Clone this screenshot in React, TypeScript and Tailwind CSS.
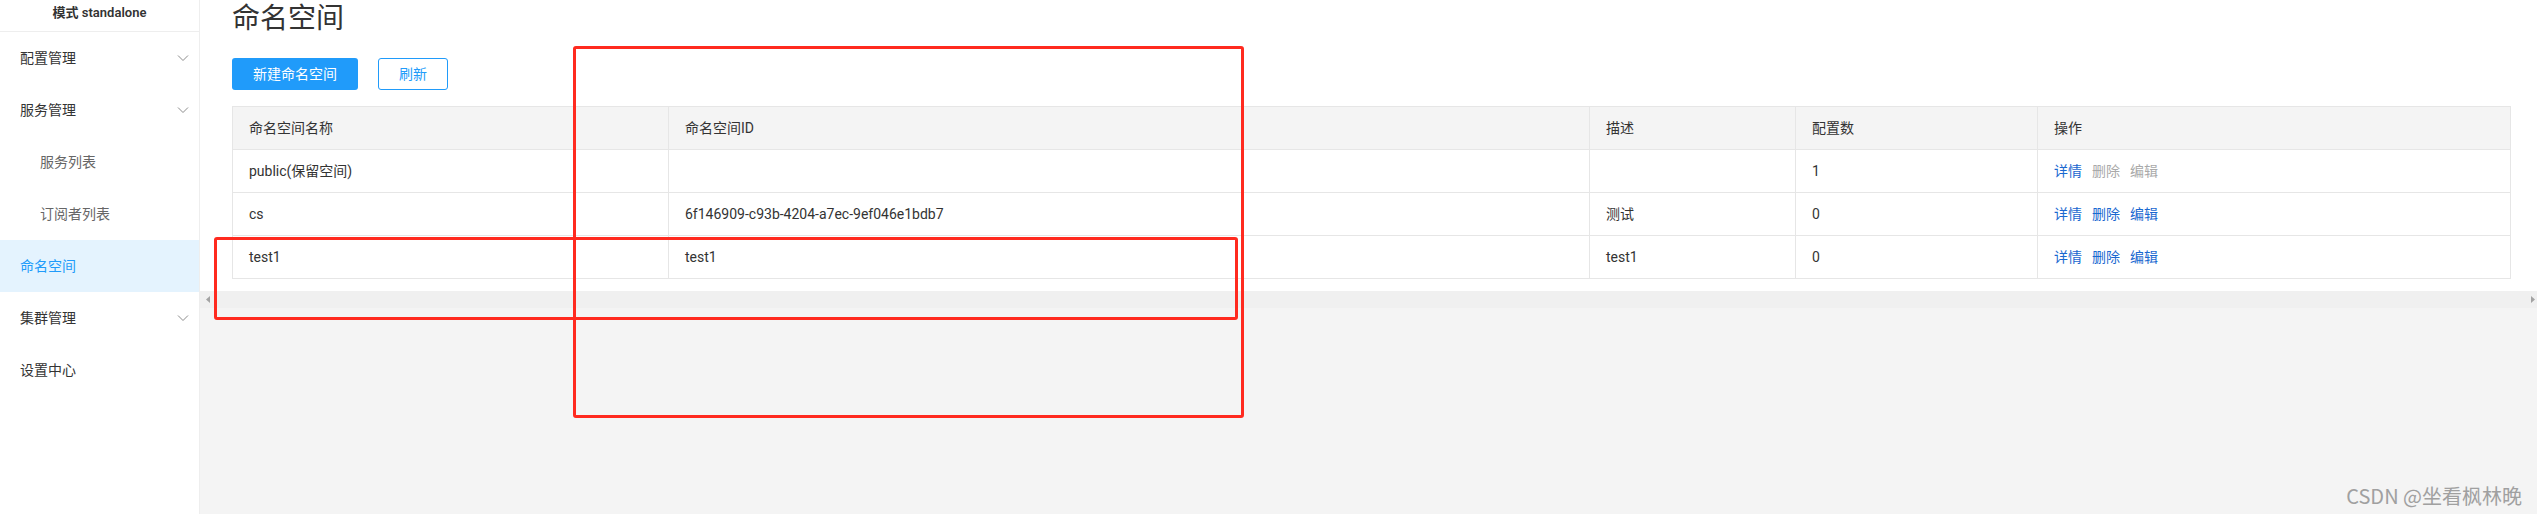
import React from "react";

const menu = [
  { label: "配置管理", arrow: true, sub: false, active: false },
  { label: "服务管理", arrow: true, sub: false, active: false },
  { label: "服务列表", arrow: false, sub: true, active: false },
  { label: "订阅者列表", arrow: false, sub: true, active: false },
  { label: "命名空间", arrow: false, sub: false, active: true },
  { label: "集群管理", arrow: true, sub: false, active: false },
  { label: "设置中心", arrow: false, sub: false, active: false },
];

const rows = [
  { name: "public(保留空间)", id: "", desc: "", count: "1", locked: true },
  { name: "cs", id: "6f146909-c93b-4204-a7ec-9ef046e1bdb7", desc: "测试", count: "0", locked: false },
  { name: "test1", id: "test1", desc: "test1", count: "0", locked: false },
];

function Chevron() {
  return (
    <svg width="20" height="20" viewBox="0 0 24 24" fill="none" stroke="#8c8c8c" strokeWidth="1.2">
      <path d="m6 9 6 6 6-6" />
    </svg>
  );
}

export default function App() {
  return (
    <div
      className="relative flex w-[2537px] h-[514px] overflow-hidden bg-white text-[#333]"
      style={{ fontFamily: 'Roboto, "Noto Sans CJK SC", sans-serif' }}
    >
      {/* sidebar */}
      <aside className="w-[200px] shrink-0 border-r border-[#eeeeee] bg-white">
        <div className="h-[32px] border-b border-[#eeeeee] flex justify-center pt-[3px] text-[13px] leading-[19px] font-semibold text-[#333]">
          模式 standalone
        </div>
        {menu.map((m) => (
          <div
            key={m.label}
            className={`h-[52px] flex items-center justify-between text-[14px] ${
              m.sub ? "pl-10 text-[#666]" : "pl-5"
            } ${m.active ? "bg-[#e4f3fe] text-[#209bfa]" : ""}`}
          >
            <span>{m.label}</span>
            {m.arrow && (
              <span className="mr-[6px] flex">
                <Chevron />
              </span>
            )}
          </div>
        ))}
      </aside>

      {/* main */}
      <main className="flex-1 flex flex-col bg-[#f4f4f4]">
        <div className="h-[291px] bg-white pl-8">
          <h1 className="h-[37px] text-[28px] leading-[37px] font-normal text-[#333]">命名空间</h1>
          <div className="mt-[21px] flex gap-5">
            <button className="w-[126px] h-[32px] rounded-[3px] bg-[#209bfa] text-white text-[14px]">
              新建命名空间
            </button>
            <button className="w-[70px] h-[32px] rounded-[3px] border border-[#209bfa] bg-white text-[#209bfa] text-[14px]">
              刷新
            </button>
          </div>
          <table className="mt-4 table-fixed border-collapse text-[14px] text-[#333]" style={{ width: 2278 }}>
            <colgroup>
              <col className="w-[436px]" />
              <col className="w-[921px]" />
              <col className="w-[206px]" />
              <col className="w-[242px]" />
              <col className="w-[473px]" />
            </colgroup>
            <thead>
              <tr className="bg-[#f4f4f4]">
                {["命名空间名称", "命名空间ID", "描述", "配置数", "操作"].map((h) => (
                  <th key={h} className="h-[43px] border border-[#e6e6e6] pl-4 text-left font-normal">
                    {h}
                  </th>
                ))}
              </tr>
            </thead>
            <tbody>
              {rows.map((r) => (
                <tr key={r.name}>
                  <td className="h-[43px] border border-[#e6e6e6] pl-4">{r.name}</td>
                  <td className="h-[43px] border border-[#e6e6e6] pl-4">{r.id}</td>
                  <td className="h-[43px] border border-[#e6e6e6] pl-4">{r.desc}</td>
                  <td className="h-[43px] border border-[#e6e6e6] pl-4">{r.count}</td>
                  <td className="h-[43px] border border-[#e6e6e6] pl-4">
                    <span className="text-[#1a68d0] mr-[10px]">详情</span>
                    <span className={`mr-[10px] ${r.locked ? "text-[#a9a9a9]" : "text-[#1a68d0]"}`}>删除</span>
                    <span className={r.locked ? "text-[#a9a9a9]" : "text-[#1a68d0]"}>编辑</span>
                  </td>
                </tr>
              ))}
            </tbody>
          </table>
        </div>
        {/* horizontal scrollbar */}
        <div className="h-[17px] bg-[#f0f0f0] flex items-center justify-between px-[6px]">
          <svg width="4" height="7" viewBox="0 0 4 7">
            <path d="M4 0 L0 3.5 L4 7 Z" fill="#a3a3a3" />
          </svg>
          <svg width="4" height="7" viewBox="0 0 4 7" className="mr-[-4px]">
            <path d="M0 0 L4 3.5 L0 7 Z" fill="#a3a3a3" />
          </svg>
        </div>
        <div className="flex-1" />
      </main>

      {/* annotation boxes */}
      <div className="absolute left-[573px] top-[46px] w-[671px] h-[372px] border-[3px] border-[#ff2a1f] rounded-[3px]" />
      <div className="absolute left-[214px] top-[237px] w-[1024px] h-[83px] border-[3px] border-[#ff2a1f] rounded-[3px]" />

      {/* watermark */}
      <div
        className="absolute right-[15px] top-[482px] text-[20px] leading-[28px] text-[#a0a0a0]"
        style={{ fontFamily: '"Noto Sans CJK SC", sans-serif' }}
      >
        CSDN @坐看枫林晚
      </div>
    </div>
  );
}
